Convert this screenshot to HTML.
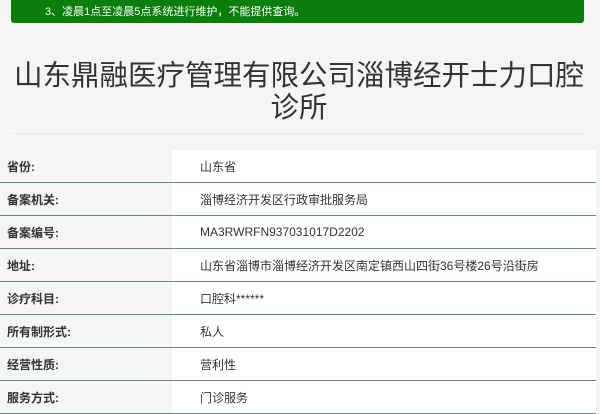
<!DOCTYPE html>
<html><head><meta charset="utf-8"><style>
body{margin:0;background:#f5f5f5;font-family:"Liberation Sans","Noto Sans CJK SC",sans-serif;width:600px;height:400px;overflow:hidden;position:relative}
.ban{position:absolute;left:11px;top:-10px;width:573px;height:33px;background:#0a7d0a;border-radius:3px;color:#fff;font-size:11px}
.ban span{position:absolute;left:34px;top:13px}
h1{position:absolute;left:0;top:60px;width:598px;margin:0;text-align:center;font-weight:normal;font-size:28.5px;line-height:32px;color:#333;white-space:nowrap}
.hr{position:absolute;left:12px;top:133px;width:572px;height:1px;background:#e8e8e8}
table{position:absolute;left:0;top:150px;width:596px;border-collapse:collapse;font-size:12px;color:#333}
td{height:32px;border-bottom:1px solid #5e8f7e;padding:0}
td.l{width:165px;padding-left:7px;font-weight:bold;background:#f5f5f5}
td.v{background:#fff;padding-left:28px}
</style></head><body>
<div class="ban"><span>3、凌晨1点至凌晨5点系统进行维护，不能提供查询。</span></div>
<h1>山东鼎融医疗管理有限公司淄博经开士力口腔<br>诊所</h1>
<div class="hr"></div>
<table>
<tr><td class="l">省份:</td><td class="v">山东省</td></tr>
<tr><td class="l">备案机关:</td><td class="v">淄博经济开发区行政审批服务局</td></tr>
<tr><td class="l">备案编号:</td><td class="v">MA3RWRFN937031017D2202</td></tr>
<tr><td class="l">地址:</td><td class="v">山东省淄博市淄博经济开发区南定镇西山四街36号楼26号沿街房</td></tr>
<tr><td class="l">诊疗科目:</td><td class="v">口腔科******</td></tr>
<tr><td class="l">所有制形式:</td><td class="v">私人</td></tr>
<tr><td class="l">经营性质:</td><td class="v">营利性</td></tr>
<tr><td class="l">服务方式:</td><td class="v">门诊服务</td></tr>
</table>
</body></html>
